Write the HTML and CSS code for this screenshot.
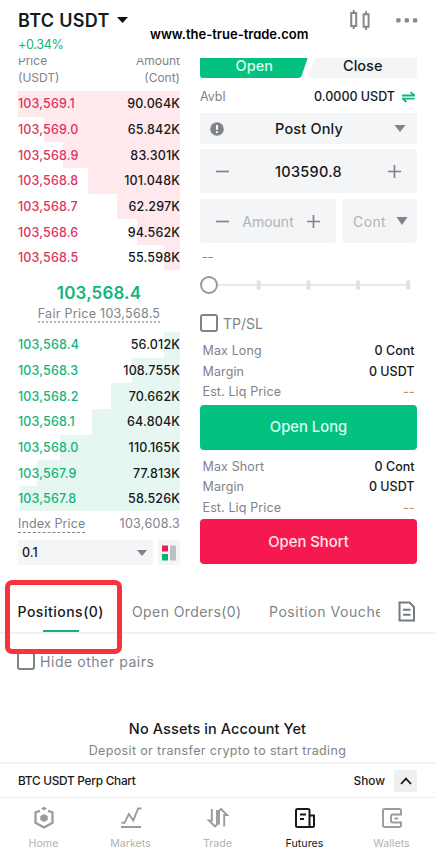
FILE: index.html
```html
<!DOCTYPE html>
<html lang="en">
<head>
<meta charset="utf-8">
<title>BTC USDT Futures</title>
<link rel="stylesheet" href="styles.css">
</head>
<body>
<div class="app">
  <header class="header">
    <div class="pair-block">
      <div class="pair"><span class="pair-name">BTC USDT</span><svg width="11" height="6" viewBox="0 0 11 6"><path d="M0 0h11L5.5 6z" fill="#111"/></svg></div>
      <div class="change">+0.34%</div>
    </div>
    <div class="site">www.the-true-trade.com</div>
    <div class="header-icons">
      <svg width="22" height="22" viewBox="0 0 22 22" fill="none" stroke="#85888c" stroke-width="2"><path d="M2.2 4h5v13h-5zM4.700 1v3M4.700 17v3M14.600 5.300h5v12.500h-5zM17.100 2.300v3M17.100 18v3"/></svg>
      <svg width="22" height="5" viewBox="0 0 22 5" fill="#85888c"><rect x=".3" y=".3" width="4.200" height="4.200" rx="1"/><rect x="8.700" y=".3" width="4.200" height="4.200" rx="1"/><rect x="17" y=".3" width="4.200" height="4.200" rx="1"/></svg>
    </div>
  </header>

  <main class="trade">
    <section class="book">
      <div class="book-head"><div>Price<br>(USDT)</div><div class="right">Amount<br>(Cont)</div></div>
      <div class="rows asks">
        <div class="row" style="--depth:162px"><span>103,569.1</span><b>90.064K</b></div>
        <div class="row" style="--depth:136px"><span>103,569.0</span><b>65.842K</b></div>
        <div class="row" style="--depth:117px"><span>103,568.9</span><b>83.301K</b></div>
        <div class="row" style="--depth:92px"><span>103,568.8</span><b>101.048K</b></div>
        <div class="row" style="--depth:63px"><span>103,568.7</span><b>62.297K</b></div>
        <div class="row" style="--depth:43px"><span>103,568.6</span><b>94.562K</b></div>
        <div class="row" style="--depth:16px"><span>103,568.5</span><b>55.598K</b></div>
      </div>
      <div class="mid">
        <div class="last">103,568.4</div>
        <div class="fair">Fair Price 103,568.5</div>
      </div>
      <div class="rows bids">
        <div class="row" style="--depth:16px"><span>103,568.4</span><b>56.012K</b></div>
        <div class="row" style="--depth:48px"><span>103,568.3</span><b>108.755K</b></div>
        <div class="row" style="--depth:69px"><span>103,568.2</span><b>70.662K</b></div>
        <div class="row" style="--depth:88px"><span>103,568.1</span><b>64.804K</b></div>
        <div class="row" style="--depth:120px"><span>103,568.0</span><b>110.165K</b></div>
        <div class="row" style="--depth:143px"><span>103,567.9</span><b>77.813K</b></div>
        <div class="row" style="--depth:160px"><span>103,567.8</span><b>58.526K</b></div>
      </div>
      <div class="index"><span class="index-label">Index Price</span><span class="index-value">103,608.3</span></div>
      <div class="book-foot">
        <div class="step"><span>0.1</span><svg width="10" height="6" viewBox="0 0 10 6"><path d="M0 0h10L5 6z" fill="#808387"/></svg></div>
        <div class="view"><svg width="14" height="16" viewBox="0 0 14 16"><path d="M0 .5h6v6H0z" fill="#f6194f"/><path d="M0 9h6v6.500H0z" fill="#04b374"/><path d="M8 .5h6v15H8z" fill="#bfc0c1"/></svg></div>
      </div>
    </section>

    <section class="form">
      <div class="side">
        <svg class="side-bg" width="217" height="20" viewBox="0 0 217 20"><path d="M0 0h107.600L102 17q-1 3-4 3H3q-3 0-3-3z" fill="#04c17f"/><path d="M115 0H217v17q0 3-3 3H111.500q-3 0-2-3z" fill="#f3f5f7"/></svg>
        <span class="open">Open</span><span class="close">Close</span>
      </div>
      <div class="avbl"><span>Avbl</span><span class="avbl-value">0.0000 USDT</span><svg width="13" height="12" viewBox="0 0 14 12" fill="none" stroke="#12b57c" stroke-width="2"><path d="M0 4.400h13.300L9.200 .8M13.500 7.800H.7L4.800 11.400"/></svg></div>
      <div class="field type">
        <svg width="14" height="14" viewBox="0 0 14 14"><circle cx="7" cy="7" r="6.800" fill="#808387"/><path d="M7 3v4.800M7 9.200v1.800" stroke="#fff" stroke-width="1.900"/></svg>
        <span class="type-text">Post Only</span>
        <svg width="12" height="7" viewBox="0 0 12 7"><path d="M.5 0h11L6 7z" fill="#808387"/></svg>
      </div>
      <div class="field price">
        <svg width="13" height="13" viewBox="0 0 13 13" stroke="#808387" stroke-width="1.700"><path d="M0 6.500h13"/></svg>
        <span class="price-text">103590.8</span>
        <svg width="13" height="13" viewBox="0 0 13 13" stroke="#808387" stroke-width="1.700"><path d="M0 6.500h13M6.500 0v13"/></svg>
      </div>
      <div class="qty">
        <div class="field amount">
          <svg width="13" height="13" viewBox="0 0 13 13" stroke="#808387" stroke-width="1.700"><path d="M0 6.500h13"/></svg>
          <span class="ghost">Amount</span>
          <svg width="13" height="13" viewBox="0 0 13 13" stroke="#808387" stroke-width="1.700"><path d="M0 6.500h13M6.500 0v13"/></svg>
        </div>
        <div class="field unit"><span class="ghost ghost-unit">Cont</span><svg width="12" height="8" viewBox="0 0 12 8"><path d="M.5 0h11L6 8z" fill="#808387"/></svg></div>
      </div>
      <div class="dashes">--</div>
      <svg class="slider" width="217" height="20" viewBox="0 0 217 20"><path d="M17 10h192" stroke="#e5e7e8" stroke-width="2"/><path d="M58.700 5.500v9M108.500 5.500v9M158 5.500v9M208.200 5.500v9" stroke="#dfe1e2" stroke-width="4"/><circle cx="9" cy="10" r="8" fill="#fff" stroke="#96989b" stroke-width="1.900"/></svg>
      <label class="check tpsl"><i></i><span>TP/SL</span></label>
      <div class="facts">
        <div><span>Max Long</span><b>0 Cont</b></div>
        <div><span>Margin</span><b>0 USDT</b></div>
        <div><span>Est. Liq Price</span><b class="none">--</b></div>
      </div>
      <div class="btn long">Open Long</div>
      <div class="facts">
        <div><span>Max Short</span><b>0 Cont</b></div>
        <div><span>Margin</span><b>0 USDT</b></div>
        <div><span>Est. Liq Price</span><b class="none">--</b></div>
      </div>
      <div class="btn short">Open Short</div>
    </section>
  </main>

  <nav class="tabs">
    <div class="tab active">Positions(0)</div>
    <div class="tab orders">Open Orders(0)</div>
    <div class="tab voucher">Position Voucher</div>
    <svg width="18" height="21" viewBox="0 0 18 21" fill="none" stroke="#757b84" stroke-width="2"><path d="M1.500 1.500h10L16 6v13.500H1.500zM5 8.700h7.500M5 13.700h7.500"/></svg>
    <div class="marker"></div>
  </nav>
  <section class="positions">
    <label class="check pairs"><i></i><span>Hide other pairs</span></label>
    <div class="empty-title">No Assets in Account Yet</div>
    <div class="empty-text">Deposit or transfer crypto to start trading</div>
  </section>
  <div class="chart-bar"><span class="chart-name">BTC USDT Perp Chart</span><span class="show">Show</span><div class="toggle"><svg width="12" height="8" viewBox="0 0 12 8" fill="none" stroke="#17191c" stroke-width="1.800"><path d="M1 7l5-5.400L11 7"/></svg></div></div>
  <footer class="nav">
    <div class="nav-item"><svg width="22" height="24" viewBox="0 0 22 24" fill="none" stroke="#999b9d" stroke-width="2.300"><path d="M7 4.800L2.500 6.500v10.300L11 21.500l8.500-4.700V6.500L15 4.800"/><path d="M11 .8l3 1.800-3 1.800-3-1.800z" fill="#999b9d" stroke="none"/><path d="M11 8l3.700 2v4L11 16l-3.700-2v-4z" fill="#999b9d" stroke="none"/></svg><span>Home</span></div>
    <div class="nav-item"><svg width="22" height="24" viewBox="0 0 22 24" fill="none" stroke="#999b9d" stroke-width="1.900"><path d="M1.500 16.800h3L8.800 8l4.500 6.500 4.800-12h3.400M1 21h20"/></svg><span>Markets</span></div>
    <div class="nav-item"><svg width="22" height="24" viewBox="0 0 22 24" fill="none" stroke="#999b9d" stroke-width="1.900"><path d="M4.800 3v11.500H1.800L8 20.500l2-2V4M17.200 20.500V9h3L14 3l-2 2v13.500"/></svg><span>Trade</span></div>
    <div class="nav-item on"><svg width="22" height="24" viewBox="0 0 22 24" fill="none" stroke="#17191c" stroke-width="2"><path d="M15.500 21H3.500q-1.500 0-1.500-1.500v-15Q2 3 3.500 3H14q1.500 0 1.500 1.500zH18.500q1.500 0 1.500-1.500V9.500H15.500M6 8.500h6M6 13h4"/></svg><span>Futures</span></div>
    <div class="nav-item"><svg width="22" height="24" viewBox="0 0 22 24" fill="none" stroke="#999b9d" stroke-width="1.900"><path d="M20 8V4.500Q20 3 18.500 3h-15Q2 3 2 4.500v15Q2 21 3.500 21h15q1.500 0 1.500-1.500V17M21 8.500H12q-2 0-2 2v4q0 2 2 2h9M13.500 12.500H17"/></svg><span>Wallets</span></div>
  </footer>
</div>
</body>
</html>
```
FILE: styles.css
```css
* { box-sizing: border-box; }
body { margin: 0; background: #fff; font-family: Inter, "Liberation Sans", sans-serif; color: #17191c; }
svg { display: block; flex: none; }
b { font-weight: 500; }
.app { width: 435px; height: 864px; display: flex; flex-direction: column; overflow: hidden; white-space: nowrap; }

.header { height: 58px; flex: none; display: flex; align-items: flex-start; padding: 0 17px 0 18px; position: relative; z-index: 1; background: #fff; }
.pair-block { width: 132px; padding-top: 8px; }
.pair { display: flex; align-items: center; gap: 7px; height: 24px; }
.pair-name { font-size: 18px; font-weight: 600; letter-spacing: .3px; }
.change { font-size: 12.500px; line-height: 16px; margin-top: 5px; color: #12b57c; letter-spacing: -.3px; }
.site { margin-top: 24px; font-size: 13px; line-height: 20px; font-weight: 600; color: #000; font-feature-settings: "cv11"; }
.header-icons { margin-left: auto; display: flex; align-items: center; gap: 25px; padding-top: 9px; }

.trade { height: 517px; flex: none; display: flex; gap: 20px; padding-left: 18px; }
.book { width: 162px; display: flex; flex-direction: column; }
.book-head { display: flex; justify-content: space-between; height: 33px; font-size: 12px; line-height: 17px; color: #808387; flex: none; }
.book-head div { margin-top: -6px; }
.right { text-align: right; }
.row { height: 25.650px; display: flex; justify-content: space-between; align-items: center; font-size: 12.500px; font-weight: 500; letter-spacing: .15px; background-repeat: no-repeat; background-position: right top; background-size: var(--depth) 100%; }
.asks .row { background-image: linear-gradient(#ffe9ed, #ffe9ed); }
.asks span { color: #dc3560; }
.bids .row { background-image: linear-gradient(#e5f7f0, #e5f7f0); }
.bids span { color: #12b57c; }
.mid { height: 61.500px; display: flex; flex-direction: column; align-items: center; padding-top: 12px; }
.last { font-size: 17px; line-height: 22px; font-weight: 600; color: #12b57c; letter-spacing: .15px; }
.fair { font-size: 12.500px; line-height: 15px; margin-top: 2px; color: #808387; border-bottom: 2px dotted #b4b6b9; letter-spacing: .28px; }
.index { height: 29px; display: flex; justify-content: space-between; align-items: flex-start; padding-top: 5px; font-size: 12.500px; line-height: 16px; color: #808387; }
.index-label { border-bottom: 1px dashed #808387; letter-spacing: .12px; }
.index-value { letter-spacing: .3px; }
.book-foot { display: flex; justify-content: space-between; height: 25px; }
.step { width: 135px; background: #f4f5f7; display: flex; align-items: center; justify-content: space-between; padding: 0 6px 0 4px; font-size: 12.500px; font-weight: 500; }
.view { width: 22px; background: #f4f5f7; display: flex; align-items: center; justify-content: center; }

.form { width: 217px; display: flex; flex-direction: column; }
.side { height: 20px; display: grid; grid-template-columns: 1fr 1fr; font-size: 14.500px; line-height: 15px; font-weight: 500; text-align: center; }
.side > * { grid-row: 1; }
.side-bg { grid-column: 1 / 3; }
.open { grid-column: 1; color: #d9fff0; }
.close { grid-column: 2; }
.avbl { height: 35px; display: flex; align-items: center; gap: 7px; padding: 2px 2px 0 0; font-size: 12.500px; color: #808387; }
.avbl-value { margin-left: auto; color: #17191c; font-weight: 500; }
.field { background: #f4f5f7; display: flex; align-items: center; justify-content: space-between; flex: none; }
.type { height: 31px; padding: 0 11px 0 10px; font-size: 14.500px; font-weight: 500; }
.type-text { letter-spacing: .15px; }
.price { height: 44px; margin-top: 5px; padding: 0 16px; font-size: 14.500px; font-weight: 500; }
.price-text { letter-spacing: .3px; }
.qty { display: flex; gap: 6px; margin-top: 6px; }
.amount { width: 136px; height: 44px; border-radius: 4px; padding: 0 16px; }
.unit { width: 75px; height: 44px; border-radius: 4px; padding: 0 9px 0 11px; }
.ghost { font-size: 14px; color: #b0b3b7; }
.ghost-unit { letter-spacing: .4px; }
.dashes { height: 32px; padding: 6px 0 0 2px; font-size: 12.500px; line-height: 16px; color: #808387; }
.check { display: flex; align-items: center; gap: 5px; font-size: 14px; color: #808387; }
.check i { width: 18px; height: 18px; border: 2px solid #808387; border-radius: 3px; }
.tpsl { height: 18px; margin: 19px 0 9px; }
.facts { padding: 0 2.500px; height: 63.500px; font-size: 12.500px; color: #808387; }
.facts div { display: flex; justify-content: space-between; line-height: 20.600px; }
.facts span { letter-spacing: .12px; }
.facts b { color: #17191c; }
.facts .none { color: #dc8a50; }
.btn { height: 45px; flex: none; display: flex; align-items: center; justify-content: center; border-radius: 4px; font-size: 14.800px; font-weight: 500; }
.long { background: #04c17f; color: #d9fff0; }
.short { background: #f6194f; color: #ffe6ec; }
.long + .facts { height: 69.500px; padding-top: 7px; }

.tabs { height: 59px; flex: none; position: relative; display: flex; align-items: center; padding: 16px 19px 0 17.500px; border-bottom: 2px solid #f0f1f2; font-size: 14px; color: #808387; }
.tab { height: 100%; display: flex; align-items: center; letter-spacing: .4px; }
.active { width: 86.500px; color: #17191c; font-weight: 500; position: relative; letter-spacing: .5px; }
.active::after { content: ""; position: absolute; left: 25px; bottom: 0; width: 36px; height: 2px; background: #12b57c; }
.orders { margin-left: 28px; width: 137px; }
.voucher { width: 111px; overflow: hidden; margin-right: auto; letter-spacing: .55px; }
.marker { position: absolute; left: 5px; top: 5px; width: 117px; height: 74px; border: 5px solid #f8333f; border-radius: 7px; z-index: 2; }
.positions { height: 128px; flex: none; padding: 18px 0 0 17px; }
.pairs { letter-spacing: .55px; }
.empty-title { margin: 49px 0 0 -17px; text-align: center; font-size: 14.500px; line-height: 20px; font-weight: 500; letter-spacing: .1px; }
.empty-text { margin: 2px 0 0 -17px; text-align: center; font-size: 12.500px; line-height: 20px; color: #808387; letter-spacing: .35px; }
.chart-bar { height: 36px; flex: none; display: flex; align-items: center; border-top: 2px solid #f2f3f4; border-bottom: 1px solid #eceded; padding: 0 18px; font-size: 11.800px; font-weight: 500; }
.chart-name { letter-spacing: -.25px; }
.show { margin-left: auto; }
.toggle { width: 23px; height: 22px; margin-left: 9px; background: #eef0f2; display: flex; align-items: center; justify-content: center; }
.nav { display: grid; grid-template-columns: repeat(5, 1fr); flex: 1; padding-top: 8px; }
.nav-item { display: flex; flex-direction: column; align-items: center; gap: 7px; font-size: 10.700px; line-height: 14px; color: #b0b2b4; }
.on { color: #17191c; }
```
